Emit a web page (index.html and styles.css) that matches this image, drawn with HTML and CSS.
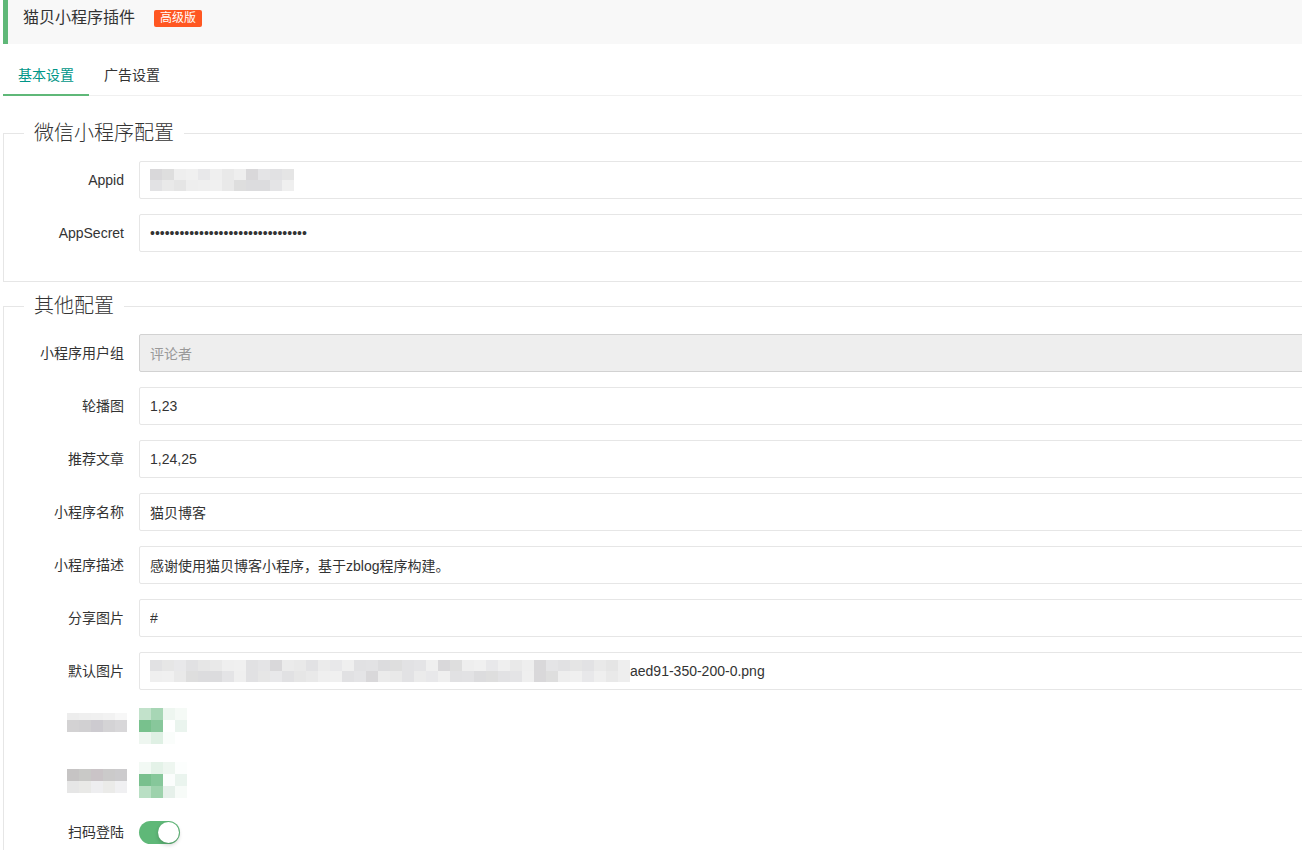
FILE: index.html
```html
<!DOCTYPE html>
<html lang="zh-CN">
<head>
    <meta charset="UTF-8">
    <title>猫贝小程序插件</title>
    <link rel="stylesheet" href="styles.css">
</head>
<body>
    <div class="page">
        <div class="plugin-head">
            <span class="plugin-title">猫贝小程序插件</span>
            <span class="badge">高级版</span>
        </div>

        <ul class="tab-title">
            <li class="tab-this">基本设置</li>
            <li>广告设置</li>
        </ul>

        <fieldset class="field">
            <legend>微信小程序配置</legend>
            <div class="field-box">
                <div class="form-item">
                    <label class="form-label">Appid</label>
                    <div class="input-block">
                        <div class="input fake-input">
                            <span class="mosaic" data-cols="12" data-rows="2" data-palette="grey"></span>
                        </div>
                    </div>
                </div>
                <div class="form-item">
                    <label class="form-label">AppSecret</label>
                    <div class="input-block">
                        <input class="input" type="password" value="abcdefghijklmnopqrstuvwxyz123456">
                    </div>
                </div>
            </div>
        </fieldset>

        <fieldset class="field">
            <legend>其他配置</legend>
            <div class="field-box">
                <div class="form-item">
                    <label class="form-label">小程序用户组</label>
                    <div class="input-block">
                        <input class="input input-disabled" type="text" value="评论者" disabled>
                    </div>
                </div>
                <div class="form-item">
                    <label class="form-label">轮播图</label>
                    <div class="input-block"><input class="input" type="text" value="1,23"></div>
                </div>
                <div class="form-item">
                    <label class="form-label">推荐文章</label>
                    <div class="input-block"><input class="input" type="text" value="1,24,25"></div>
                </div>
                <div class="form-item">
                    <label class="form-label">小程序名称</label>
                    <div class="input-block"><input class="input" type="text" value="猫贝博客"></div>
                </div>
                <div class="form-item">
                    <label class="form-label">小程序描述</label>
                    <div class="input-block"><input class="input" type="text" value="感谢使用猫贝博客小程序，基于zblog程序构建。"></div>
                </div>
                <div class="form-item">
                    <label class="form-label">分享图片</label>
                    <div class="input-block"><input class="input" type="text" value="#"></div>
                </div>
                <div class="form-item">
                    <label class="form-label">默认图片</label>
                    <div class="input-block">
                        <div class="input fake-input">
                            <span class="mosaic" data-cols="40" data-rows="2" data-palette="grey"></span>
                            <span class="fake-text">aed91-350-200-0.png</span>
                        </div>
                    </div>
                </div>
                <div class="form-item">
                    <div class="form-label label-hidden">
                        <span class="mosaic mosaic-label label-a" data-colors="ededed,efefef,f0f0f0,f2f2f2,f7f7f7;d3d2d3,d1d0d2,cdcbd0,d4d3d5,d8d7d9"></span>
                    </div>
                    <div class="input-block">
                        <span class="mosaic mosaic-switch" data-colors="c2e2cb,a7d6b5,eef6f0,f5faf6;78c18d,88c79b,ffffff,eaf4ee;eef6f0,dff0e4,fafdfb,ffffff"></span>
                    </div>
                </div>
                <div class="form-item">
                    <div class="form-label label-hidden">
                        <span class="mosaic mosaic-label label-b" data-colors="c6c4c4,c9c9c7,cac4c7,cbcaca,cccbcd;e6e6e6,e9e9e7,eeeef0,ebebe9,f0f0f2"></span>
                    </div>
                    <div class="input-block">
                        <span class="mosaic mosaic-switch" data-colors="f2f9f4,e4f2e8,eef6f0,fcfefd;79c08e,86c79a,fbfdfc,eaf4ee;b9dfc4,9dd2ac,e6f0ea,f7fbf8"></span>
                    </div>
                </div>
                <div class="form-item">
                    <label class="form-label">扫码登陆</label>
                    <div class="input-block">
                        <span class="switch switch-on"><i></i></span>
                    </div>
                </div>
            </div>
        </fieldset>
    </div>

    <script>
        // fill the blurred blocks with squares, either from a fixed list or from a soft grey palette
        const greys = ['e4e4e6', 'ebebeb', 'e1e1e3', 'eeeeee', 'e6e6e6', 'dcdcde', 'e9e9e9', 'efefef', 'e2e2e4', 'dedede', 'e8e8ea', 'f0f0f0', 'd9d8da', 'e5e5e5'];
        let seed = 7;
        function nextGrey() {
            seed = (seed * 31 + 17) % 97;
            return greys[seed % greys.length];
        }

        document.querySelectorAll('.mosaic').forEach(box => {
            let rows;
            if (box.dataset.colors) {
                rows = box.dataset.colors.split(';').map(r => r.split(','));
            } else {
                const cols = +box.dataset.cols;
                rows = [];
                for (let r = 0; r < +box.dataset.rows; r++) {
                    const row = [];
                    for (let c = 0; c < cols; c++) row.push(nextGrey());
                    rows.push(row);
                }
            }
            box.style.gridTemplateColumns = `repeat(${rows[0].length}, 12px)`;
            rows.forEach(row => row.forEach(color => {
                const cell = document.createElement('i');
                cell.style.background = '#' + color;
                box.appendChild(cell);
            }));
        });
    </script>
</body>
</html>
```

FILE: styles.css
```css
:root {
    --green: #5FB878;
    --teal: #009688;
    --line: #e6e6e6;
    --text: #333;
}
html, body {
    margin: 0;
    overflow: hidden;
}
body {
    font-family: "Liberation Sans", "Noto Sans CJK SC", sans-serif;
    font-size: 14px;
    color: var(--text);
    background-color: #fff;
}
.page {
    width: 1360px;
    padding-left: 3px;
}
.plugin-head {
    height: 44px;
    background-color: #f8f8f8;
    border-left: 5px solid var(--green);
    padding-left: 15px;
    display: flex;
    align-items: flex-start;
}
.plugin-title {
    font-size: 16px;
    line-height: 36px;
}
.badge {
    margin: 10px 0 0 19px;
    height: 17px;
    line-height: 17px;
    padding: 0 6px;
    font-size: 12px;
    color: #fff;
    background-color: #FF5722;
    border-radius: 2px;
}
.tab-title {
    list-style: none;
    margin: 11px 0 0 0;
    padding: 0;
    height: 40px;
    display: flex;
    border-bottom: 1px solid #f0f0f0;
}
.tab-title li {
    padding: 0 15px;
    line-height: 40px;
    cursor: pointer;
}
.tab-title .tab-this {
    color: var(--teal);
    border-bottom: 2px solid var(--green);
    height: 39px;
}
.field {
    margin: 23px 0 0 0;
    padding: 0 20px;
    border: 1px solid var(--line);
    min-width: 0;
}
.field + .field {
    margin-top: 10px;
}
.field legend {
    margin-left: 0;
    padding: 0 10px;
    font-size: 20px;
    font-weight: 300;
    line-height: 28px;
}
.field-box {
    padding: 14px 0;
}
.form-item {
    display: flex;
    margin-bottom: 15px;
    min-height: 38px;
}
.form-label {
    width: 85px;
    padding: 9px 15px;
    line-height: 20px;
    text-align: right;
    flex-shrink: 0;
}
.input-block {
    flex: 1;
    display: flex;
    align-items: flex-start;
}
.input {
    box-sizing: border-box;
    width: 100%;
    height: 38px;
    padding: 0 10px;
    border: 1px solid var(--line);
    border-radius: 2px;
    font-family: inherit;
    font-size: 14px;
    color: var(--text);
    background-color: #fff;
    outline: none;
}
.input-disabled {
    background-color: #eee;
    border-color: #d2d2d2;
    color: #999;
}
.fake-input {
    display: flex;
    align-items: center;
}
.fake-text {
    line-height: 20px;
}
.mosaic {
    display: grid;
    grid-auto-rows: 11px;
}
.mosaic i {
    display: block;
}
.label-hidden {
    display: flex;
    justify-content: flex-end;
    align-items: flex-start;
    padding: 0;
    width: 115px;
}
.mosaic-label {
    margin-right: 12px;
}
.label-a {
    margin-top: 8px;
    grid-template-rows: 7px 12px;
}
.label-b {
    margin-top: 10px;
    grid-template-rows: 12px 12px;
}
.mosaic-switch {
    margin-top: 3px;
    grid-auto-rows: 12px;
}
.switch {
    position: relative;
    margin-top: 8px;
    width: 41px;
    height: 23px;
    border-radius: 12px;
    background-color: #ddd;
    cursor: pointer;
}
.switch-on {
    background-color: var(--green);
}
.switch i {
    position: absolute;
    top: 1px;
    right: 1px;
    width: 21px;
    height: 21px;
    border-radius: 50%;
    background-color: #fff;
    box-shadow: 0 2px 4px rgba(0, 0, 0, 0.2);
}
```
